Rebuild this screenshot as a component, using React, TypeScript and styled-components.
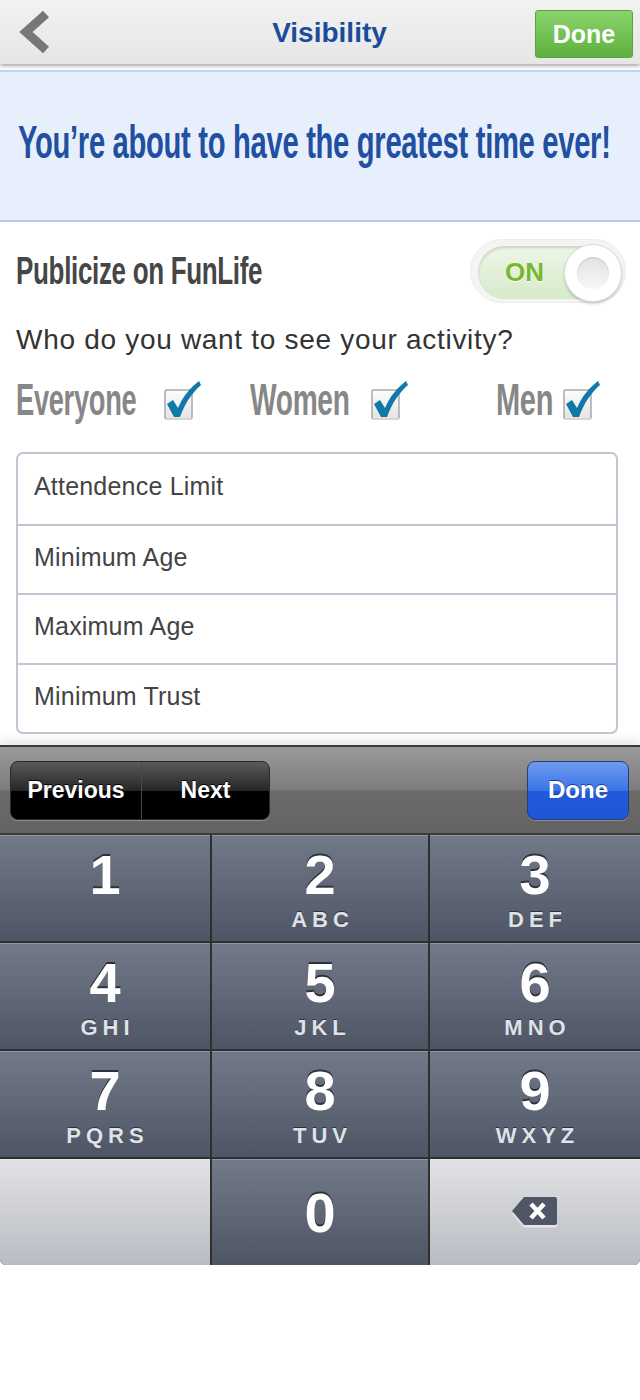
import styled, { createGlobalStyle } from "styled-components";

const GlobalStyle = createGlobalStyle`
  body {
    margin: 0;
    background: #ffffff;
    font-family: "Liberation Sans", Arial, sans-serif;
  }
  * { box-sizing: border-box; }
`;

const Page = styled.div`
  width: 640px;
  min-height: 1400px;
  background: #fff;
  display: flex;
  flex-direction: column;
`;

// ---------- top bar ----------
const TopBar = styled.header`
  height: 64px;
  display: grid;
  grid-template-columns: 1fr auto 1fr;
  align-items: center;
  padding: 0 7px 0 16px;
  background: linear-gradient(#f2f2f2, #e6e6e6);
  box-shadow: 0 2px 4px rgba(0, 0, 0, 0.35);
  position: relative;
  z-index: 1;
`;

const BackBtn = styled.div`
  display: flex;
  align-items: center;
  justify-self: start;
`;

const Title = styled.h1`
  margin: 2px 0 0 10px;
  font-size: 28px;
  font-weight: 700;
  color: #1a4c9c;
`;

const GreenButton = styled.div`
  justify-self: end;
  width: 98px;
  height: 48px;
  margin-top: 4px;
  border-radius: 3px;
  background: linear-gradient(#8bd46c, #5cb13f);
  border: 1px solid #5aa43f;
  color: #fff;
  font-size: 25px;
  font-weight: 700;
  display: flex;
  align-items: center;
  justify-content: center;
`;

// ---------- banner ----------
const Banner = styled.section`
  margin-top: 6px;
  height: 152px;
  background: #e8effc;
  border-top: 2px solid #c4d4ee;
  border-bottom: 2px solid #b9cae6;
  display: flex;
  align-items: center;
  padding: 0 0 8px 18px;
`;

const Squeeze = styled.span<{ $sx: number; $size: number; $color: string }>`
  display: inline-block;
  white-space: nowrap;
  font-family: "Liberation Sans", Arial, sans-serif;
  font-weight: 700;
  font-size: ${(p) => p.$size}px;
  color: ${(p) => p.$color};
  transform: scaleX(${(p) => p.$sx});
  transform-origin: left center;
  letter-spacing: -0.5px;
`;

// ---------- settings ----------
const Content = styled.div`
  padding: 0 16px 0 16px;
  display: flex;
  flex-direction: column;
`;

const PublicizeRow = styled.div`
  height: 98px;
  display: flex;
  align-items: center;
  justify-content: space-between;
  margin-right: -2px;
`;

const SlotLabel = styled.div<{ $w: number }>`
  width: ${(p) => p.$w}px;
  overflow: visible;
`;

const ToggleHalo = styled.div`
  width: 156px;
  height: 64px;
  border-radius: 32px;
  background: #f4f4f4;
  border: 1px solid #ececec;
  padding: 6px 5px 3px 7px;
`;

const ToggleTrack = styled.div`
  height: 100%;
  border-radius: 28px;
  background: linear-gradient(#eef6e8, #d6eacb);
  box-shadow: inset 0 2px 3px rgba(0, 0, 0, 0.15);
  display: flex;
  align-items: center;
  justify-content: space-between;
  padding-left: 27px;
`;

const ToggleText = styled.span`
  font-size: 26px;
  font-weight: 700;
  color: #79b72c;
  text-shadow: 0 1px 0 #fff;
`;

const Knob = styled.div`
  width: 58px;
  height: 58px;
  border-radius: 50%;
  background: #fff;
  border: 1px solid #dcdcdc;
  box-shadow: 0 2px 3px rgba(0, 0, 0, 0.18);
  display: flex;
  align-items: center;
  justify-content: center;
  margin-right: -2px;
`;

const KnobDot = styled.div`
  width: 32px;
  height: 32px;
  border-radius: 50%;
  background: linear-gradient(#e2e2e2, #f8f8f8);
  box-shadow: inset 0 1px 2px rgba(0, 0, 0, 0.12);
`;

const Question = styled.p`
  margin: 4px 0 0 0;
  font-size: 28px;
  line-height: 32px;
  letter-spacing: 0.7px;
  color: #333;
`;

const OptionsRow = styled.div`
  display: grid;
  grid-template-columns: 234px 246px 1fr;
  margin-top: 17px;
  height: 54px;
  align-items: center;
`;

const Option = styled.div`
  display: flex;
  align-items: center;
`;

const ListBox = styled.div`
  margin-top: 25px;
  width: 602px;
  border: 2px solid #c4c4d2;
  border-radius: 7px;
  overflow: hidden;
`;

const ListRow = styled.div`
  height: 69.5px;
  display: flex;
  align-items: center;
  padding: 0 0 4px 16px;
  font-size: 25px;
  letter-spacing: 0.2px;
  color: #444;
  & + & {
    border-top: 2px solid #c4c4d2;
  }
`;

// ---------- keyboard ----------
const Keyboard = styled.div`
  margin-top: 11px;
  border-top: 2px solid #3a3a3a;
  box-shadow: 0 -6px 8px rgba(0, 0, 0, 0.08);
  border-radius: 0 0 6px 6px;
  overflow: hidden;
`;

const Toolbar = styled.div`
  height: 88px;
  display: flex;
  align-items: center;
  justify-content: space-between;
  padding: 0 11px 0 10px;
  background: linear-gradient(#9a9a9a 0%, #7c7c7c 50%, #6b6b6b 51%, #636363 100%);
  border-bottom: 2px solid #3b3b3b;
`;

const Segmented = styled.div`
  display: flex;
  height: 59px;
  border-radius: 8px;
  border: 1px solid #2a2a2a;
  overflow: hidden;
  background: linear-gradient(#5a5a5a 0%, #262626 50%, #000 51%, #000 100%);
  box-shadow: 0 1px 0 rgba(255, 255, 255, 0.25);
`;

const SegButton = styled.div<{ $w: number }>`
  width: ${(p) => p.$w}px;
  display: flex;
  align-items: center;
  justify-content: center;
  color: #fff;
  font-size: 23px;
  font-weight: 700;
  text-shadow: 0 -1px 0 #000;
  & + & {
    border-left: 1px solid #4a4a4a;
  }
`;

const BlueButton = styled.div`
  width: 102px;
  height: 59px;
  border-radius: 8px;
  border: 1px solid #263f7a;
  background: linear-gradient(#6f9cf0 0%, #3b74e6 50%, #2258da 51%, #1f55d6 100%);
  color: #fff;
  font-size: 24px;
  font-weight: 700;
  display: flex;
  align-items: center;
  justify-content: center;
  text-shadow: 0 -1px 0 #1a3c8c;
  box-shadow: 0 1px 0 rgba(255, 255, 255, 0.25);
`;

const KeyGrid = styled.div`
  display: grid;
  grid-template-columns: 210px 216px 210px;
  grid-auto-rows: 106px;
  gap: 2px;
  background: #2f2f2f;
`;

const Key = styled.div<{ $light?: boolean }>`
  display: flex;
  flex-direction: column;
  align-items: center;
  justify-content: flex-start;
  padding-top: 12px;
  background: ${(p) =>
    p.$light
      ? "linear-gradient(#e1e2e5, #b9bcc3)"
      : "linear-gradient(#727a89, #4e5565)"};
  box-shadow: inset 0 1px 0 rgba(255, 255, 255, 0.2);
`;

const Digit = styled.div<{ $center?: boolean }>`
  font-size: 56px;
  font-weight: 700;
  line-height: 56px;
  color: #fff;
  text-shadow: 0 -2px 0 #2c313b;
  margin-top: ${(p) => (p.$center ? "14px" : "0")};
`;

const Letters = styled.div`
  margin-top: 4px;
  font-size: 22px;
  font-weight: 700;
  letter-spacing: 5px;
  padding-left: 5px;
  color: #dfe2e7;
  text-shadow: 0 -1px 0 #2c313b;
`;

const IconKey = styled(Key)`
  justify-content: center;
  padding-top: 0;
`;

const Chevron = () => (
  <svg width="36" height="44" viewBox="0 0 36 44">
    <path d="M30 4 L10 22 L30 40" fill="none" stroke="#777" strokeWidth="9" strokeLinejoin="miter" />
  </svg>
);

const CheckBox = () => (
  <svg width="42" height="44" viewBox="0 0 42 44">
    <defs>
      <linearGradient id="cbg" x1="0" y1="0" x2="0" y2="1">
        <stop offset="0" stopColor="#fdfdfd" />
        <stop offset="1" stopColor="#e4e4e4" />
      </linearGradient>
    </defs>
    <rect x="4" y="12" width="27" height="29" rx="2" fill="url(#cbg)" stroke="#a9a9a9" strokeWidth="1.5" />
    <rect x="5" y="40" width="26" height="2" fill="#d5d5d5" />
    <path
      d="M6 26 L12 22 L17 30 C22 18 29 10 38 3 L40 7 C31 15 24 25 19 39 L13 39 Z"
      fill="#1178aa"
    />
  </svg>
);

const Backspace = () => (
  <svg width="50" height="34" viewBox="0 0 50 34">
    <path d="M14 3 H45 Q47 3 47 5 V29 Q47 31 45 31 H14 L2 17 Z" fill="#fff" opacity="0.5" transform="translate(0 1.5)" />
    <path d="M14 2 H45 Q47 2 47 4 V28 Q47 30 45 30 H14 L2 16 Z" fill="#4f5665" />
    <path d="M21 9 L34 23 M34 9 L21 23" stroke="#fff" strokeWidth="4.5" strokeLinecap="butt" />
  </svg>
);

const keys = [
  ["1", ""],
  ["2", "ABC"],
  ["3", "DEF"],
  ["4", "GHI"],
  ["5", "JKL"],
  ["6", "MNO"],
  ["7", "PQRS"],
  ["8", "TUV"],
  ["9", "WXYZ"],
];

const fields = ["Attendence Limit", "Minimum Age", "Maximum Age", "Minimum Trust"];

export default function App() {
  return (
    <Page>
      <GlobalStyle />
      <TopBar>
        <BackBtn>
          <Chevron />
        </BackBtn>
        <Title>Visibility</Title>
        <GreenButton>Done</GreenButton>
      </TopBar>

      <Banner>
        <Squeeze $sx={0.635} $size={46} $color="#2150a2">
          You’re about to have the greatest time ever!
        </Squeeze>
      </Banner>

      <Content>
        <PublicizeRow>
          <SlotLabel $w={260}>
            <Squeeze $sx={0.685} $size={38} $color="#464646">
              Publicize on FunLife
            </Squeeze>
          </SlotLabel>
          <ToggleHalo>
            <ToggleTrack>
              <ToggleText>ON</ToggleText>
              <Knob>
                <KnobDot />
              </Knob>
            </ToggleTrack>
          </ToggleHalo>
        </PublicizeRow>

        <Question>Who do you want to see your activity?</Question>

        <OptionsRow>
          <Option>
            <SlotLabel $w={145}>
              <Squeeze $sx={0.62} $size={44} $color="#878787">Everyone</Squeeze>
            </SlotLabel>
            <CheckBox />
          </Option>
          <Option>
            <SlotLabel $w={118}>
              <Squeeze $sx={0.64} $size={44} $color="#878787">Women</Squeeze>
            </SlotLabel>
            <CheckBox />
          </Option>
          <Option>
            <SlotLabel $w={64}>
              <Squeeze $sx={0.66} $size={44} $color="#878787">Men</Squeeze>
            </SlotLabel>
            <CheckBox />
          </Option>
        </OptionsRow>

        <ListBox>
          {fields.map((f) => (
            <ListRow key={f}>{f}</ListRow>
          ))}
        </ListBox>
      </Content>

      <Keyboard>
        <Toolbar>
          <Segmented>
            <SegButton $w={130}>Previous</SegButton>
            <SegButton $w={128}>Next</SegButton>
          </Segmented>
          <BlueButton>Done</BlueButton>
        </Toolbar>
        <KeyGrid>
          {keys.map(([d, l]) => (
            <Key key={d}>
              <Digit>{d}</Digit>
              {l && <Letters>{l}</Letters>}
            </Key>
          ))}
          <Key $light />
          <Key>
            <Digit $center>0</Digit>
          </Key>
          <IconKey $light>
            <Backspace />
          </IconKey>
        </KeyGrid>
      </Keyboard>
    </Page>
  );
}
